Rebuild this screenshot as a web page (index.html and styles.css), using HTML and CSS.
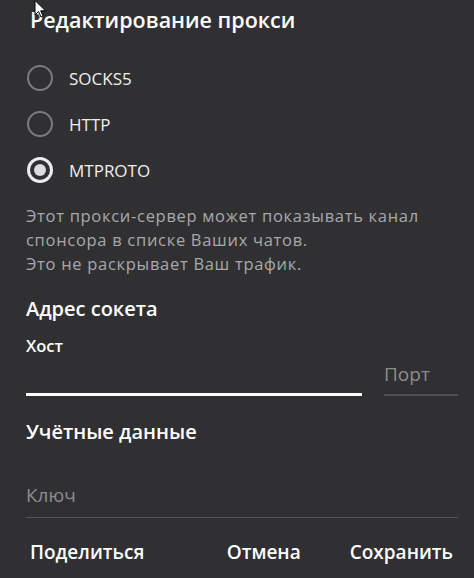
FILE: index.html
```html
<!DOCTYPE html>
<html lang="ru">
<head>
<meta charset="utf-8">
<link rel="stylesheet" href="styles.css">
</head>
<body>
<div class="box">
  <h1 class="title">Редактирование прокси</h1>
  <div class="radios">
    <div class="radio"><span class="circle"></span><span class="rlabel">SOCKS5</span></div>
    <div class="radio"><span class="circle"></span><span class="rlabel">HTTP</span></div>
    <div class="radio checked"><span class="circle"><span class="dot"></span></span><span class="rlabel">MTPROTO</span></div>
  </div>
  <p class="about">Этот прокси-сервер может показывать канал<br>спонсора в списке Ваших чатов.<br>Это не раскрывает Ваш трафик.</p>
  <h2 class="section">Адрес сокета</h2>
  <div class="fields">
    <div class="field host">
      <div class="flabel">Хост</div>
      <div class="line active"></div>
    </div>
    <div class="field port">
      <div class="placeholder">Порт</div>
      <div class="line"></div>
    </div>
  </div>
  <h2 class="section creds">Учётные данные</h2>
  <div class="field key">
    <div class="placeholder">Ключ</div>
    <div class="line"></div>
  </div>
  <div class="buttons">
    <span class="btn share">Поделиться</span>
    <div class="right">
      <span class="btn">Отмена</span>
      <span class="btn">Сохранить</span>
    </div>
  </div>
</div>
<svg class="cursor" width="14" height="20" viewBox="0 0 14 20"><path d="M1 0.5 L1 15 L4.5 11.5 L7 17 L9 16 L6.7 10.8 L11.5 10.8 Z" fill="#fff" stroke="#000" stroke-width="1"/></svg>
</body>
</html>
```
FILE: styles.css
```css
html, body {
  margin: 0;
  padding: 0;
  background: #303033;
  width: 474px;
  height: 578px;
  overflow: hidden;
  font-family: "Open Sans", "DejaVu Sans", sans-serif;
  color: #ffffff;
}
.box {
  position: relative;
  padding: 0 16px 0 26px;
}
.title {
  margin: 0;
  padding: 6px 0 0 4px;
  font-size: 21.5px;
  line-height: 28px;
  font-weight: 600;
  color: #ffffff;
}
.radios {
  margin-top: 21px;
  display: flex;
  flex-direction: column;
}
.radio {
  height: 46px;
  display: flex;
  align-items: center;
}
.circle {
  box-sizing: border-box;
  width: 26px;
  height: 26px;
  border-radius: 50%;
  border: 2px solid #7c7c7f;
  display: flex;
  align-items: center;
  justify-content: center;
  margin-left: 1px;
}
.checked .circle {
  border: 3px solid #ececee;
}
.dot {
  width: 12px;
  height: 12px;
  border-radius: 50%;
  background: #dcdde0;
}
.rlabel {
  margin-left: 16px;
  font-size: 17px;
  color: #eeeeee;
}
.about {
  margin: 11px 0 0 0;
  font-size: 16.5px;
  line-height: 24px;
  letter-spacing: 0.7px;
  color: #a8a8ab;
}
.section {
  margin: 20px 0 0 0;
  font-size: 20px;
  line-height: 26px;
  font-weight: 600;
  color: #ffffff;
}
.fields {
  display: flex;
  align-items: flex-end;
  gap: 22px;
}
.host {
  width: 336px;
}
.port {
  flex: 1;
}
.flabel {
  margin-top: 13px;
  font-size: 16.5px;
  line-height: 22px;
  font-weight: 600;
  color: #ffffff;
  height: 58px;
}
.placeholder {
  font-size: 19px;
  line-height: 26px;
  color: #8c8c90;
  padding-bottom: 7px;
}
.line {
  height: 2px;
  background: #4e4e52;
}
.line.active {
  height: 3px;
  background: #ffffff;
}
.creds {
  margin-top: 22px;
  line-height: 28px;
}
.key {
  margin-top: 36px;
}
.key .placeholder {
  padding-bottom: 9px;
}
.key .line {
  height: 1px;
  background: #56565a;
}
.buttons {
  margin-top: 21px;
  display: flex;
  justify-content: space-between;
  padding: 0 5px 0 4px;
}
.right {
  display: flex;
  gap: 49px;
}
.btn {
  font-size: 19px;
  line-height: 26px;
  font-weight: 600;
  color: #ffffff;
}
.cursor {
  position: absolute;
  left: 34px;
  top: 0;
}
```
